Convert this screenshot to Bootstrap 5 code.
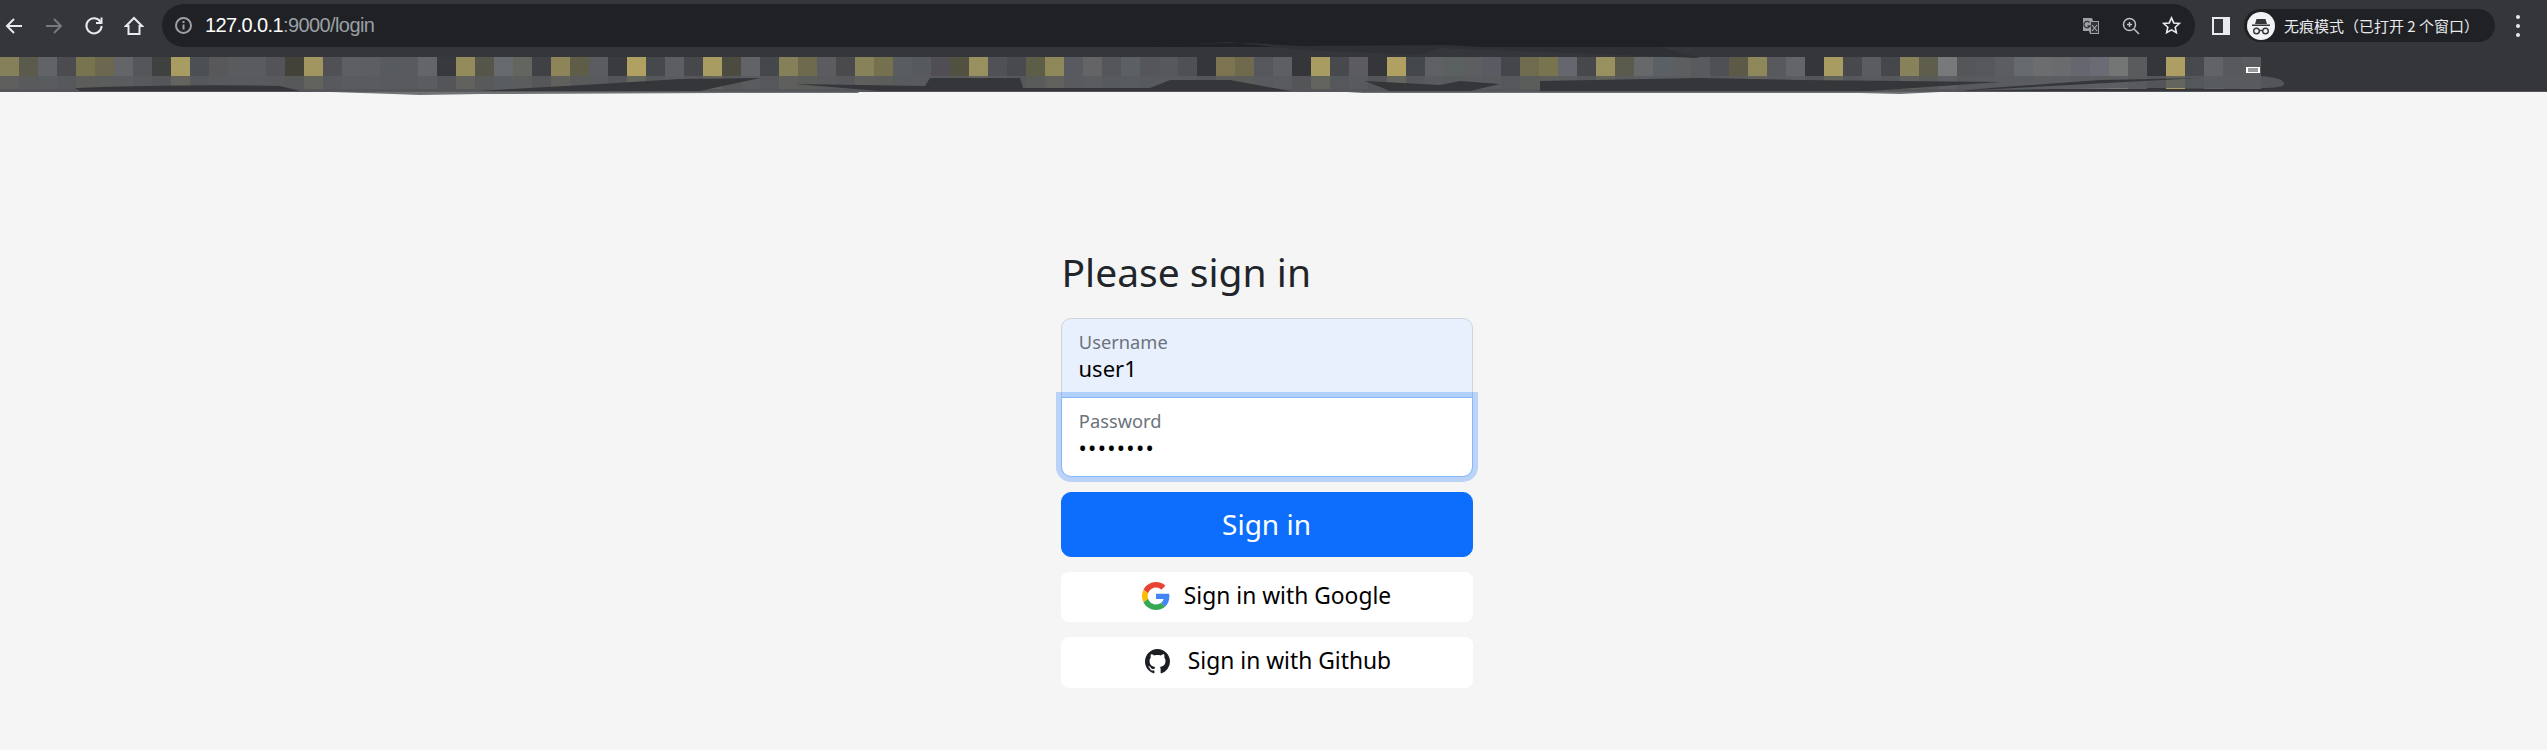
<!DOCTYPE html>
<html lang="en">
<head>
  <meta charset="UTF-8" />
  <title>Please sign in</title>
  <meta name="viewport" content="width=device-width, initial-scale=1" />
  <link href="https://cdn.jsdelivr.net/npm/bootstrap@5.3.0/dist/css/bootstrap.min.css" rel="stylesheet" />
  <style>
    html { font-size: 20px; }
    body { background: #f5f5f5; font-family: "Noto Sans", "Liberation Sans", sans-serif; overflow: hidden; }

    .chrome-top { height: 92px; background: #35363a; border-bottom: 1px solid #55565a; position: relative; }
    .chrome-tools { height: 51px; padding: 4px 0 4px 0; }
    .tool-btn { width: 40px; flex: none; }
    .tools-nav { width: 162px; padding-right: 8px; margin-left: -6px; margin-right: 6px; }
    .omnibox { width: 2033px; height: 43px; background: #202124; border-radius: 22px; padding-left: 12px; padding-right: 14px; }
    .omni-url { font: 20px "Liberation Sans", sans-serif; letter-spacing: -.6px; color: #9aa0a6; margin-left: 12px; }
    .omni-url b { font-weight: 400; color: #fff; }
    .omni-actions { gap: 22px; }
    .sidebar-icon { margin-left: 17px; }
    .incognito-pill { width: 251px; height: 33px; margin-left: 14px; background: #202124; border-radius: 17px; padding-left: 3px; color: #e8eaed; font: 15px "Noto Sans CJK SC", sans-serif; white-space: nowrap; }
    .incognito-pill svg { margin-right: 9px; }
    .menu-dots { margin-left: 21px; }
    .menu-dot { width: 4px; height: 4px; background: #e8eaed; }
    .mosaic-strip { position: absolute; top: 57px; left: 0; height: 32px; }
    .mosaic-cell { width: 19px; height: 32px; flex: none; }
    .scribble { position: absolute; top: 40px; left: 0; pointer-events: none; }

    .login-page { padding-right: 14px; padding-top: 157px; }
    .login-form { width: 412px; }
    .login-title { font-size: 39px; line-height: 1.2; font-weight: 400; color: #212529; margin: 0 0 22px 1px; }
    .login-form .form-control { height: 80px; min-height: 80px; color: #000; border-color: #ced4da; padding-left: 17px; font-size: 22px; padding-top: 34px; }
    .login-form .form-floating > label { padding-left: 17px; padding-top: 22px; color: #6c737a; font-size: 21.500px; }
    .login-form .form-floating > .form-control:not(:placeholder-shown) ~ label { opacity: 1; }
    .input-user { background: #e8f0fe; border-radius: 10px 10px 0 0; margin-bottom: -1px; }
    .input-user:focus { background: #e8f0fe; }
    .input-pass { border-radius: 0 0 10px 10px; position: relative; z-index: 2; border-color: #86b7fe !important; box-shadow: 0 0 0 5px rgba(13, 110, 253, .25); letter-spacing: 1.300px; }
    .label-over { z-index: 3; }
    .login-submit { height: 65px; margin-top: 15px; font-size: 28px; line-height: 1; border-radius: 10px; background: #0d6efd; }
    .social-btn { background: #fff; color: #000; border-radius: 8px; font-size: 22.800px; line-height: 1.3; text-decoration: none; }
    .social-google { height: 50px; margin-top: 15px; gap: 14px; padding-bottom: 2px; }
    .social-github { height: 51px; margin-top: 15px; gap: 18px; padding-left: 3px; padding-bottom: 2px; }
  </style>
</head>
<body>
  <div class="chrome-top">
    <div class="chrome-tools d-flex align-items-center">
      <div class="tools-nav d-flex flex-shrink-0">
        <div class="tool-btn d-flex justify-content-center">
          <svg width="20" height="20" viewBox="0 0 20 20" fill="none" stroke="#e8eaed" stroke-width="2"><path d="M18 10H3M10 3l-7 7 7 7"/></svg>
        </div>
        <div class="tool-btn d-flex justify-content-center">
          <svg width="20" height="20" viewBox="0 0 20 20" fill="none" stroke="#77797c" stroke-width="2"><path d="M2 10h15M10 3l7 7-7 7"/></svg>
        </div>
        <div class="tool-btn d-flex justify-content-center">
          <svg width="20" height="20" viewBox="0 0 20 20" fill="none" stroke="#e8eaed" stroke-width="2"><path d="M16.600 6A7.600 7.600 0 1 0 17.600 10"/><path d="M17.500 1.500V7h-5.500" /></svg>
        </div>
        <div class="tool-btn d-flex justify-content-center">
          <svg width="20" height="20" viewBox="0 0 20 20" fill="none" stroke="#e8eaed" stroke-width="2"><path d="M10 2 2 10h2.500v8h11v-8H18z"/></svg>
        </div>
      </div>
      <div class="omnibox d-flex align-items-center flex-shrink-0">
        <svg width="19" height="19" viewBox="0 0 19 19" fill="none" stroke="#9aa0a6" stroke-width="2"><circle cx="9.500" cy="9.500" r="7.500"/><path d="M9.500 8.500v5M9.500 5v2"/></svg>
        <span class="omni-url"><b>127.0.0.1</b>:9000/login</span>
        <div class="omni-actions ms-auto d-flex align-items-center">
          <svg width="18" height="18" viewBox="0 0 18 18"><path d="M1 1h9l1 3h6v13H8l-1-3H1z" fill="#9aa0a6"/><path d="M9 5h7v11H9z" fill="#35363a"/><path d="M7.500 5.500A3.200 3.200 0 1 0 8 9H5.500" fill="none" stroke="#35363a" stroke-width="1.300"/><path d="M10 8l5 6M15 8l-5 6" stroke="#bdc1c6"/></svg>
          <svg width="18" height="18" viewBox="0 0 18 18" fill="none" stroke="#bdc1c6" stroke-width="1.500"><circle cx="7.500" cy="7.500" r="6"/><path d="M12 12l5 5M7.500 5v5M5 7.500h5"/></svg>
          <svg width="19" height="19" viewBox="0 0 20 20" fill="none" stroke="#e8eaed" stroke-width="1.700"><path d="m10 2 2.400 5.300 5.800.6-4.300 3.900 1.200 5.700L10 14.600l-5.100 2.900 1.200-5.700-4.300-3.900 5.800-.6z"/></svg>
        </div>
      </div>
      <div class="sidebar-icon d-flex align-items-center flex-shrink-0">
        <svg width="18" height="18" viewBox="0 0 18 18"><path d="M0 0h18v18H0z" fill="#e8eaed"/><path d="M2 2h9v14H2z" fill="#35363a"/></svg>
      </div>
      <div class="incognito-pill d-flex align-items-center flex-shrink-0">
        <svg width="28" height="28" viewBox="0 0 28 28"><circle cx="14" cy="14" r="14" fill="#f1f3f4"/><path d="M9.500 7h9l1.500 5H8z M5 12.500h18v1.500H5z" fill="#35363a"/><g fill="none" stroke="#35363a" stroke-width="1.400"><circle cx="9.500" cy="19" r="2.800"/><circle cx="18.500" cy="19" r="2.800"/><path d="M12.300 18.500h3.400"/></g></svg>
        <span>无痕模式（已打开 2 个窗口）</span>
      </div>
      <div class="menu-dots d-flex flex-column gap-1 flex-shrink-0">
        <span class="menu-dot d-block rounded-circle"></span>
        <span class="menu-dot d-block rounded-circle"></span>
        <span class="menu-dot d-block rounded-circle"></span>
      </div>
    </div>
    <div class="mosaic-strip d-flex" id="mosaicStrip"></div>
    <svg class="scribble" width="2547" height="58" viewBox="0 40 2547 58">
      <path d="M0 76H2260Q2285 78 2284 84Q2284 88 2260 88H2100L1960 91 1900 94 1860 93 1500 93 1363 93 1330 91 860 91 858 93 720 93 482 94 420 95 393 94 300 91 0 91Z" fill="#585a5e" fill-opacity=".85"/>
      <path d="M75 88Q180 84 280 86L300 91H80ZM480 91 600 84 680 79 760 78 700 91ZM795 84 925 86 930 78 1020 78 1023 88 1150 88 1170 80 1230 80 1290 91 880 91ZM1365 81 1440 85 1460 81 1500 84 1470 91 1390 91ZM1540 81 1700 78 1800 80 2000 82 1870 91 1540 91ZM1990 88 2100 80 2200 78 1960 91Z" fill="#35363a"/>
      <path d="M1120 47 1230 42 1300 50 1420 55 1440 48 1700 58 1660 47 1480 47 1450 45 1300 46 1250 43 1180 44Z" fill="#2f3033"/>
      <path d="M2246 67h14v6h-14z" fill="#fff"/><path d="M2248 69h10M2248 71h10" stroke="#35363a"/>
    </svg>
  </div>

  <main class="login-page d-flex justify-content-center">
    <form class="login-form" onsubmit="return false">
      <h2 class="login-title">Please sign in</h2>
      <div class="form-floating">
        <input type="text" class="form-control input-user" id="username" placeholder="Username" value="user1" />
        <label for="username">Username</label>
      </div>
      <div class="form-floating">
        <input type="password" class="form-control input-pass" id="password" placeholder="Password" value="password" />
        <label for="password" class="label-over">Password</label>
      </div>
      <button class="btn btn-primary w-100 login-submit" type="submit">Sign in</button>
      <a href="#" class="social-btn social-google d-flex align-items-center justify-content-center">
        <svg width="28" height="28" viewBox="0 0 48 48">
          <path fill="#EA4335" d="M24 9.500c3.540 0 6.710 1.220 9.210 3.600l6.850-6.850C35.900 2.380 30.470 0 24 0 14.620 0 6.510 5.380 2.560 13.220l7.980 6.190C12.430 13.720 17.740 9.500 24 9.500z"/>
          <path fill="#4285F4" d="M46.980 24.550c0-1.570-.15-3.090-.38-4.550H24v9.020h12.940c-.58 2.960-2.260 5.480-4.780 7.180l7.730 6c4.510-4.180 7.090-10.360 7.090-17.650z"/>
          <path fill="#FBBC05" d="M10.530 28.590c-.48-1.450-.76-2.990-.76-4.590s.27-3.140.76-4.590l-7.980-6.190C.92 16.460 0 20.120 0 24c0 3.880.92 7.540 2.560 10.780l7.970-6.190z"/>
          <path fill="#34A853" d="M24 48c6.480 0 11.930-2.130 15.890-5.810l-7.730-6c-2.150 1.450-4.920 2.300-8.160 2.300-6.260 0-11.570-4.220-13.470-9.910l-7.980 6.190C6.510 42.620 14.620 48 24 48z"/>
        </svg>
        <span>Sign in with Google</span>
      </a>
      <a href="#" class="social-btn social-github d-flex align-items-center justify-content-center">
        <svg width="25" height="25" viewBox="0 0 16 16" fill="#1b1f23">
          <path d="M8 0C3.580 0 0 3.580 0 8c0 3.540 2.290 6.530 5.470 7.590.4.070.55-.17.55-.38 0-.19-.01-.82-.01-1.490-2.010.37-2.530-.49-2.690-.94-.09-.23-.48-.94-.82-1.130-.28-.15-.68-.52-.01-.53.63-.01 1.080.58 1.230.82.72 1.210 1.870.87 2.330.66.070-.52.28-.87.51-1.070-1.780-.2-3.640-.89-3.640-3.950 0-.87.31-1.590.82-2.150-.08-.2-.36-1.020.08-2.120 0 0 .67-.21 2.200.82.64-.18 1.320-.27 2-.27.68 0 1.360.09 2 .27 1.530-1.040 2.200-.82 2.200-.82.44 1.100.16 1.920.08 2.120.51.56.82 1.270.82 2.150 0 3.070-1.870 3.750-3.650 3.950.29.25.54.73.54 1.480 0 1.070-.01 1.930-.01 2.200 0 .21.15.46.55.38A8.013 8.013 0 0016 8c0-4.420-3.580-8-8-8z"/>
        </svg>
        <span>Sign in with Github</span>
      </a>
    </form>
  </main>

  <script>
    // blurred bookmarks row, one colour per 19px block
    const mosaicColors = [
      "#85805a","#5a5a4d","#626366","#4c4c50","#78744f","#6c6850","#646568","#55565a","#3f4040","#a89c62",
      "#4b5054","#58585b","#5a5b5e","#5a5b5e","#545458","#434238","#a1965f","#515055","#5e5f63","#5c5e62",
      "#585b5e","#585a5d","#63656a","#38393d","#948b5c","#56554a","#666a6c","#63665f","#3f4144","#8d8559",
      "#5f5c48","#5b5c60","#3a3b3f","#b0a163","#45494c","#5d5e62","#47484c","#a89c62","#4c4b40","#626366",
      "#45484b","#86805a","#6d6a4e","#5c5b60","#4a4a4d","#88825a","#75714f","#5a5d60","#565a5e","#504e54",
      "#525040","#98905f","#4f5156","#484a4d","#5e5d47","#8e8759","#585a5f","#646366","#54565b","#5b6064",
      "#55565a","#56585b","#4f5054","#35363a","#7c7450","#6f6a4e","#55575c","#5e5f63","#35363a","#a89c62",
      "#47494c","#5b5b61","#35363a","#b0a163","#45484b","#5f6063","#5b6060","#5c5e62","#5a5a62","#45464a",
      "#6f6b4e","#78744f","#66666e","#46484b","#98905f","#5a5b4c","#67686a","#5a6063","#5c5e60","#585a5d",
      "#4e5053","#5c5a46","#8e8759","#58595c","#646568","#35363a","#a89c62","#47494d","#5b5c60","#46474b",
      "#88825a","#5f5e4c","#78797b","#55565a","#56575b","#5c5d60","#646a6e","#6c6d6e","#6a6b6e","#66676e",
      "#6a6b74","#747575","#5a5b5d","#35363a","#ad9f63","#47494c","#626366","#58595c","#5a5b5e"
    ];
    const strip = document.getElementById("mosaicStrip");
    mosaicColors.forEach(c => {
      const cell = document.createElement("div");
      cell.className = "mosaic-cell";
      cell.style.background = c;
      strip.appendChild(cell);
    });
  </script>
  <script src="https://cdn.jsdelivr.net/npm/bootstrap@5.3.0/dist/js/bootstrap.bundle.min.js"></script>
</body>
</html>
